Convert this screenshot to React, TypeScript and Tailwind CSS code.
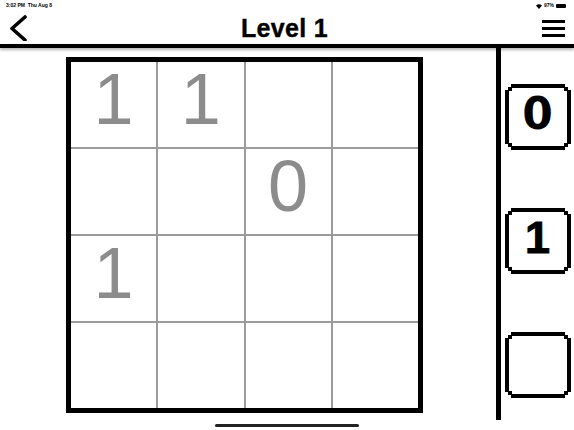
import React from "react";

const grid: string[][] = [
  ["1", "1", "", ""],
  ["", "", "0", ""],
  ["1", "", "", ""],
  ["", "", "", ""],
];

function Frame() {
  const W = 66, H = 66, p = 3, t = 4;
  const outer = `M${2 * p} 0 H${W - 2 * p} V${p} H${W - p} V${2 * p} H${W} V${H - 2 * p} H${W - p} V${H - p} H${W - 2 * p} V${H} H${2 * p} V${H - p} H${p} V${H - 2 * p} H0 V${2 * p} H${p} V${p} H${2 * p} Z`;
  const inner = `M${t + p} ${t} H${W - t - p} V${t + p} H${W - t} V${H - t - p} H${W - t - p} V${H - t} H${t + p} V${H - t - p} H${t} V${t + p} H${t + p} Z`;
  return (
    <svg className="absolute inset-0" width={W} height={H} viewBox={`0 0 ${W} ${H}`}>
      <path d={`${outer} ${inner}`} fill="#000" fillRule="evenodd" />
    </svg>
  );
}

function PickButton({ label, fontClass }: { label: string; fontClass: string }) {
  return (
    <div className="relative w-[66px] h-[66px] flex items-center justify-center pb-[7px]">
      <Frame />
      <span className={`relative font-bold leading-none text-black ${fontClass}`}>{label}</span>
    </div>
  );
}

export default function App() {
  return (
    <div className="relative w-[574px] h-[430px] bg-white overflow-hidden font-['Liberation_Sans',Arial,sans-serif]">
      {/* status bar */}
      <div className="h-[11px] flex items-center justify-between px-[6px] pt-[1px] text-[5px] font-semibold text-black">
        <span>3:02 PM&nbsp;&nbsp;Thu Aug 8</span>
        <div className="flex items-center gap-[2px] pr-[2px]">
          <svg width="6" height="5" viewBox="0 0 6 5">
            <path d="M3 5 L0 1.6 A4.5 4.5 0 0 1 6 1.6 Z" fill="#000" />
          </svg>
          <span>97%</span>
          <div className="w-[10px] h-[4px] rounded-[1px] bg-black" />
        </div>
      </div>
      {/* nav row */}
      <div className="h-[33px] flex items-center justify-between pl-[9px] pr-[9px]">
        <svg width="18" height="26" viewBox="0 0 18 26">
          <polyline points="16,2 3,13.5 16,25" fill="none" stroke="#000" strokeWidth="3.6" strokeLinecap="round" strokeLinejoin="round" />
        </svg>
        <div className="text-[25px] font-bold text-black leading-none pt-[1px] tracking-[0.3px] [-webkit-text-stroke:0.4px_black]">Level 1</div>
        <div className="flex flex-col gap-[4px] w-[23px] mt-[2px]">
          <div className="h-[3px] bg-black" />
          <div className="h-[3px] bg-black" />
          <div className="h-[3px] bg-black" />
        </div>
      </div>
      {/* header line */}
      <div className="relative z-10 h-[4px] bg-black shadow-[0_2px_3px_rgba(0,0,0,0.3)]" />
      {/* main */}
      <div className="flex h-[382px]">
        <div className="w-[496px] pl-[66px] pt-[9px]">
          <div className="w-[357px] h-[356px] border-[5px] border-black">
            <div className="grid grid-cols-4 grid-rows-4 gap-[2px] bg-[#9b9b9b] w-full h-full">
              {grid.flat().map((v, i) => (
                <div key={i} className="bg-white flex justify-center items-start pt-[1px]">
                  <span className="text-[72px] leading-none text-[#8c8c8c]">{v}</span>
                </div>
              ))}
            </div>
          </div>
        </div>
        <div className="w-[5px] h-[372px] bg-black" />
        <div className="flex-1 flex flex-col items-center pt-[36px] gap-[58px]">
          <PickButton label="0" fontClass="font-['DejaVu_Sans',sans-serif] text-[44px]" />
          <PickButton label="1" fontClass="font-['Liberation_Sans',Arial,sans-serif] text-[45px] [-webkit-text-stroke:1px_black]" />
          <PickButton label="" fontClass="text-[44px]" />
        </div>
      </div>
      {/* home indicator */}
      <div className="absolute left-[215px] top-[424px] w-[144px] h-[3px] rounded-full bg-[#222]" />
    </div>
  );
}
